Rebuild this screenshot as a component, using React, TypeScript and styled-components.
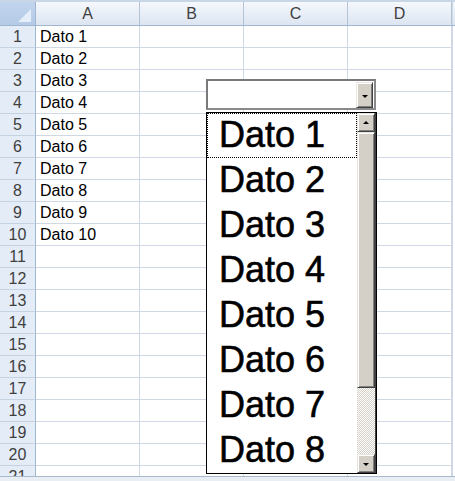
import styled, { createGlobalStyle } from "styled-components";

const GlobalStyle = createGlobalStyle`
  html, body {
    margin: 0;
    padding: 0;
    background: #ffffff;
  }
  body {
    font-family: "Liberation Sans", Arial, sans-serif;
  }
`;

const columns = ["A", "B", "C", "D"];
const rows = Array.from({ length: 21 }, (_, i) => i + 1);
const cellValues: Record<number, string> = {
  1: "Dato 1",
  2: "Dato 2",
  3: "Dato 3",
  4: "Dato 4",
  5: "Dato 5",
  6: "Dato 6",
  7: "Dato 7",
  8: "Dato 8",
  9: "Dato 9",
  10: "Dato 10",
};
const listItems = cellValues;

export default function App() {
  return (
    <>
      <GlobalStyle />
      <Window>
        <Sheet>
          <HeaderRow>
            <Corner>
              <CornerTriangle />
            </Corner>
            {columns.map((c) => (
              <ColumnHeader key={c}>{c}</ColumnHeader>
            ))}
            <Filler $header />
          </HeaderRow>
          {rows.map((r) => (
            <Row key={r}>
              <RowHeader>{r}</RowHeader>
              {columns.map((c) => (
                <Cell key={c}>{c === "A" ? cellValues[r] : ""}</Cell>
              ))}
              <Filler />
            </Row>
          ))}

          <ComboBox>
            <ComboField />
            <ComboButton>
              <ArrowDown />
            </ComboButton>
          </ComboBox>

          <ListBox>
            <Items>
              {[1, 2, 3, 4, 5, 6, 7, 8].map((n) => (
                <Item key={n} $focused={n === 1}>
                  {listItems[n]}
                </Item>
              ))}
            </Items>
            <ScrollBar>
              <ScrollButton>
                <ArrowUp />
              </ScrollButton>
              <Thumb />
              <Track />
              <ScrollButton>
                <ArrowDown />
              </ScrollButton>
            </ScrollBar>
          </ListBox>
        </Sheet>
        <BottomFrame />
      </Window>
    </>
  );
}

const Window = styled.div`
  width: 455px;
  height: 481px;
  display: flex;
  flex-direction: column;
  overflow: hidden;
  background: #ffffff;
`;

const Sheet = styled.div`
  position: relative;
  height: 477px;
  overflow: hidden;
  display: flex;
  flex-direction: column;
  border-top: 2px solid #c9d6e6;
`;

const BottomFrame = styled.div`
  height: 4px;
  border-top: 1px solid #a9b8cb;
  background: #e9eef5;
`;

const HeaderRow = styled.div`
  display: flex;
  height: 23px;
  flex-shrink: 0;
  border-bottom: 1px solid #9eb6ce;
`;

const Corner = styled.div`
  position: relative;
  width: 36px;
  flex-shrink: 0;
  box-sizing: border-box;
  border-right: 1px solid #9eb6ce;
  background: linear-gradient(#c2d5ee, #b4cae6);
`;

const CornerTriangle = styled.div`
  position: absolute;
  right: 4px;
  bottom: 3px;
  width: 0;
  height: 0;
  border-left: 13px solid transparent;
  border-bottom: 13px solid #e6eef9;
`;

const ColumnHeader = styled.div`
  width: 104px;
  flex-shrink: 0;
  box-sizing: border-box;
  border-right: 1px solid #b3c3d7;
  background: linear-gradient(#f5f8fc, #dce5f1);
  color: #404040;
  font-size: 16px;
  line-height: 23px;
  text-align: center;
`;

const Filler = styled.div<{ $header?: boolean }>`
  flex: 1;
  background: ${({ $header }) =>
    $header ? "linear-gradient(#f5f8fc, #dce5f1)" : "#ffffff"};
  border-left: 1px solid #d0d7e5;
`;

const Row = styled.div`
  display: flex;
  height: 22px;
  flex-shrink: 0;
`;

const RowHeader = styled.div`
  width: 36px;
  flex-shrink: 0;
  box-sizing: border-box;
  border-right: 1px solid #9eb6ce;
  border-bottom: 1px solid #c5d2e2;
  background: #e4ecf7;
  color: #404040;
  font-size: 16px;
  line-height: 22px;
  text-align: center;
`;

const Cell = styled.div`
  width: 104px;
  flex-shrink: 0;
  box-sizing: border-box;
  border-right: 1px solid #d0d7e5;
  border-bottom: 1px solid #d0d7e5;
  padding: 1px 0 0 4px;
  color: #000000;
  font-size: 16px;
  line-height: 20px;
  white-space: nowrap;
`;

const ComboBox = styled.div`
  position: absolute;
  left: 206px;
  top: 77px;
  width: 170px;
  height: 31px;
  box-sizing: border-box;
  display: flex;
  background: #ffffff;
  border: 2px solid;
  border-color: #7a7a7a #8a8a8a #8a8a8a #7a7a7a;
  padding: 1px 1px 0 0;
`;

const ComboField = styled.div`
  flex: 1;
`;

const raised = `
  box-sizing: border-box;
  background: #d4d0c8;
  border: 1px solid;
  border-color: #e8e6e1 #404040 #404040 #e8e6e1;
  box-shadow: inset 1px 1px #ffffff, inset -1px -1px #808080;
  display: flex;
  align-items: center;
  justify-content: center;
`;

const ComboButton = styled.div`
  ${raised}
  width: 17px;
  height: 26px;
`;

const ArrowDown = styled.div`
  width: 0;
  height: 0;
  border-left: 3px solid transparent;
  border-right: 3px solid transparent;
  border-top: 3px solid #000000;
  margin-top: 2px;
`;

const ArrowUp = styled.div`
  width: 0;
  height: 0;
  border-left: 3px solid transparent;
  border-right: 3px solid transparent;
  border-bottom: 3px solid #000000;
  margin-bottom: 1px;
`;

const ListBox = styled.div`
  position: absolute;
  left: 206px;
  top: 110px;
  width: 171px;
  height: 362px;
  box-sizing: border-box;
  border: 1px solid #000000;
  background: #ffffff;
  display: flex;
`;

const Items = styled.div`
  flex: 1;
  display: flex;
  flex-direction: column;
  overflow: hidden;
`;

const Item = styled.div<{ $focused?: boolean }>`
  height: 45px;
  flex-shrink: 0;
  box-sizing: border-box;
  padding: 1px 0 5px 11px;
  font-family: "Liberation Sans", Arial, sans-serif;
  font-size: 36px;
  line-height: 39px;
  color: #000000;
  -webkit-text-stroke: 0.6px #000000;
  border: 1px dotted ${({ $focused }) => ($focused ? "#000000" : "transparent")};
  white-space: nowrap;
`;

const ScrollBar = styled.div`
  width: 18px;
  display: flex;
  flex-direction: column;
  border-right: 1px solid #404040;
`;

const ScrollButton = styled.div`
  ${raised}
  height: 19px;
  flex-shrink: 0;
`;

const Thumb = styled.div`
  ${raised}
  height: 256px;
  flex-shrink: 0;
`;

const Track = styled.div`
  flex: 1;
  background: repeating-conic-gradient(#ffffff 0 25%, #d4d0c8 0 50%) 0 0 /
    2px 2px;
`;
